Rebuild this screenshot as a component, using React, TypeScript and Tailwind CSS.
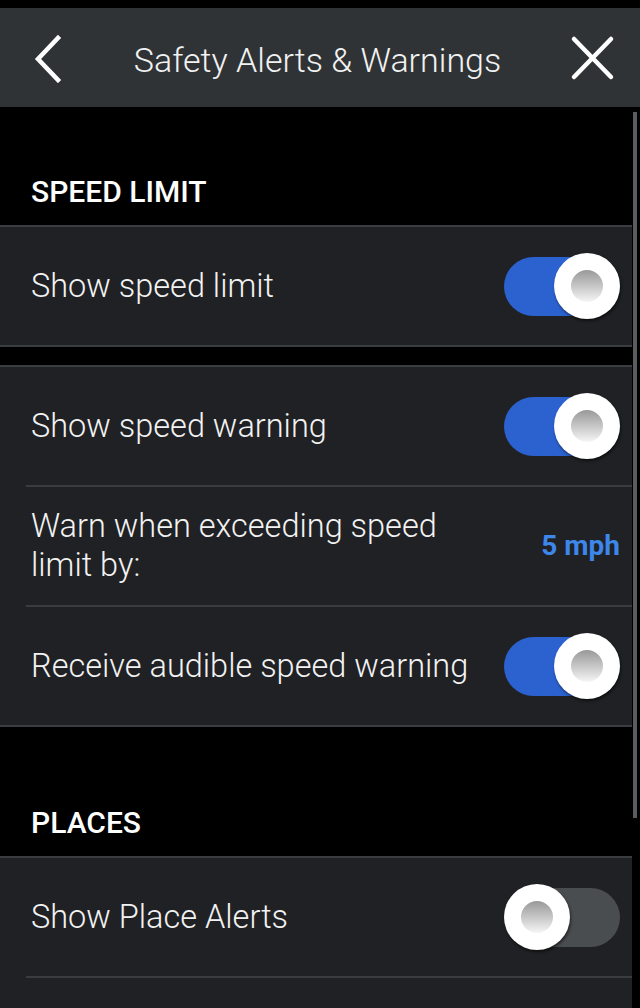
import React from "react";

function Toggle({ on }: { on: boolean }) {
  return (
    <div className="relative w-[116px] h-[59px] shrink-0">
      <div
        className={
          "absolute inset-0 rounded-full " + (on ? "bg-[#2b62d0]" : "bg-[#4a4d50]")
        }
      />
      <div
        className={
          "absolute top-1/2 -translate-y-1/2 w-[66px] h-[66px] rounded-full bg-white shadow-[1px_2px_3px_rgba(0,0,0,0.55)] flex items-center justify-center " +
          (on ? "right-0" : "left-0")
        }
      >
        <div className="w-[32px] h-[32px] rounded-full bg-gradient-to-b from-[#999999] to-[#f6f6f6]" />
      </div>
    </div>
  );
}

function Row({
  label,
  children,
  first,
}: {
  label: React.ReactNode;
  children?: React.ReactNode;
  first?: boolean;
}) {
  return (
    <div className={first ? "border-t-2 border-[#3a3c3f]" : "pl-[26px]"}>
      <div
        className={
          "h-[118px] flex items-center justify-between pr-[12px] " +
          (first ? "pl-[26px]" : "border-t-2 border-[#3a3c3f] h-[120px]")
        }
      >
        <div className="pl-[5px] text-[32.5px] font-light leading-[39px] text-[#f2f2f2]">
          {label}
        </div>
        {children}
      </div>
    </div>
  );
}

function Section({ children }: { children: React.ReactNode }) {
  return (
    <div className="bg-[#202124] border-b-2 border-[#3a3c3f]">{children}</div>
  );
}

function Heading({ text, height }: { text: string; height: string }) {
  return (
    <div className={height + " flex items-end pb-[18px] pl-[31px]"}>
      <span className="text-[30px] font-medium text-white leading-none">
        {text}
      </span>
    </div>
  );
}

export default function App() {
  return (
    <div
      className="w-[640px] h-[1008px] bg-black overflow-hidden pt-[8px] relative"
      style={{ fontFamily: "Roboto, 'Open Sans', sans-serif" }}
    >
      <header className="h-[99px] bg-[#303336] flex items-center justify-between px-[30px]">
        <svg width="34" height="50" viewBox="0 0 34 50" className="ml-[2px]">
          <path
            d="M26 5 L6 26 L26 47"
            stroke="white"
            strokeWidth="4.5"
            fill="none"
            strokeLinecap="square"
          />
        </svg>
        <h1 className="mt-[5px] text-[34px] font-light text-[#f2f2f2]">
          Safety Alerts &amp; Warnings
        </h1>
        <svg width="46" height="46" viewBox="0 0 46 46" className="mr-[-5px]">
          <path
            d="M5 4 L42 42 M42 4 L5 42"
            stroke="white"
            strokeWidth="4.5"
            fill="none"
            strokeLinecap="round"
          />
        </svg>
      </header>

      <div className="pr-[8px]">
        <Heading text="SPEED LIMIT" height="h-[118px]" />
        <Section>
          <Row label="Show speed limit" first>
            <Toggle on />
          </Row>
        </Section>
        <div className="h-[18px]" />
        <Section>
          <Row label="Show speed warning" first>
            <Toggle on />
          </Row>
          <Row
            label={
              <span className="block">
                Warn when exceeding speed
                <br />
                limit by:
              </span>
            }
          >
            <span className="text-[28px] font-bold text-[#3d86ea]">5 mph</span>
          </Row>
          <Row label="Receive audible speed warning">
            <Toggle on />
          </Row>
        </Section>
        <Heading text="PLACES" height="h-[129px]" />
        <div className="bg-[#202124] h-[200px]">
          <Row label="Show Place Alerts" first>
            <Toggle on={false} />
          </Row>
          <div className="pl-[26px]">
            <div className="border-t-2 border-[#3a3c3f]" />
          </div>
        </div>
      </div>

      <div className="absolute left-[633px] top-[112px] w-[4px] h-[706px] bg-[#5a5c5f]" />
    </div>
  );
}
